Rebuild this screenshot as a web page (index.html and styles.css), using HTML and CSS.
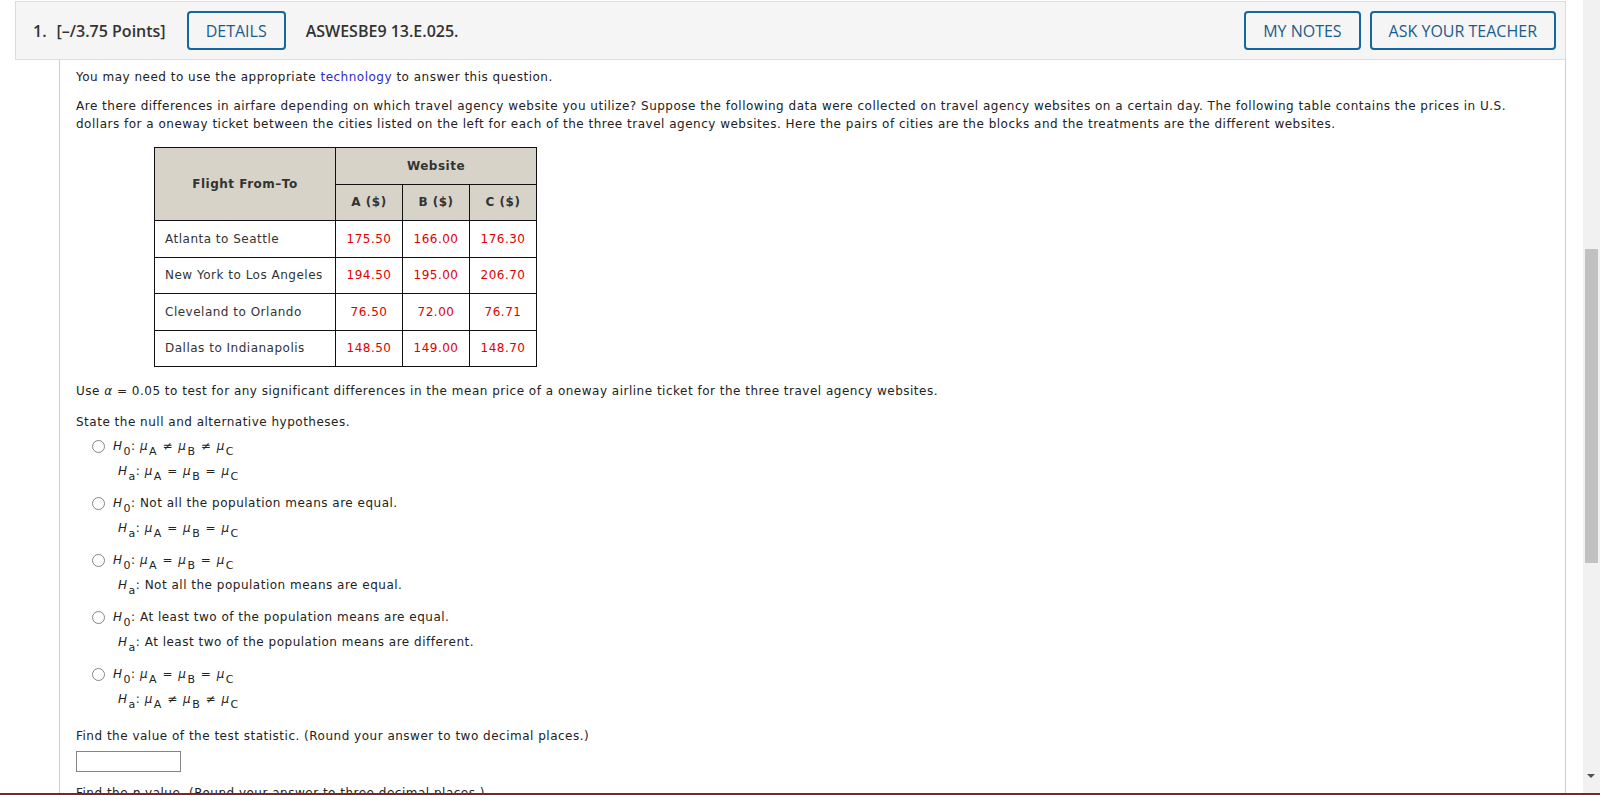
FILE: index.html
```html
<!DOCTYPE html>
<html>
<head>
<meta charset="utf-8">
<title>Question 1</title>
<link rel="stylesheet" href="styles.css">
</head>
<body>
<div class="question">
  <div class="q-header">
    <span class="q-num">1.</span>
    <span class="q-points">[–/3.75 Points]</span>
    <button class="btn btn-details">DETAILS</button>
    <span class="q-code">ASWESBE9 13.E.025.</span>
    <div class="q-actions">
      <button class="btn">MY NOTES</button>
      <button class="btn">ASK YOUR TEACHER</button>
    </div>
  </div>
  <div class="q-body">
    <p class="p-tech">You may need to use the appropriate <a class="link" href="#">technology</a> to answer this question.</p>
    <p class="p-intro">Are there differences in airfare depending on which travel agency website you utilize? Suppose the following data were collected on travel agency websites on a certain day. The following table contains the prices in U.S. dollars for a oneway ticket between the cities listed on the left for each of the three travel agency websites. Here the pairs of cities are the blocks and the treatments are the different websites.</p>
    <table class="data">
      <colgroup><col class="c-city"><col class="c-num"><col class="c-num"><col class="c-num"></colgroup>
      <tr><th rowspan="2">Flight From–To</th><th colspan="3">Website</th></tr>
      <tr><th>A ($)</th><th>B ($)</th><th>C ($)</th></tr>
      <tr><td class="city">Atlanta to Seattle</td><td class="num">175.50</td><td class="num">166.00</td><td class="num">176.30</td></tr>
      <tr><td class="city">New York to Los Angeles</td><td class="num">194.50</td><td class="num">195.00</td><td class="num">206.70</td></tr>
      <tr><td class="city">Cleveland to Orlando</td><td class="num">76.50</td><td class="num">72.00</td><td class="num">76.71</td></tr>
      <tr><td class="city">Dallas to Indianapolis</td><td class="num">148.50</td><td class="num">149.00</td><td class="num">148.70</td></tr>
    </table>
    <p class="p-use">Use <i>α</i> = 0.05 to test for any significant differences in the mean price of a oneway airline ticket for the three travel agency websites.</p>
    <p class="p-state">State the null and alternative hypotheses.</p>
    <div class="options">
      <div class="option">
        <span class="radio"></span>
        <div class="hyps">
          <div class="hyp"><i>H</i><sub>0</sub>: <i>μ</i><sub>A</sub> <span class="op">≠</span> <i>μ</i><sub>B</sub> <span class="op">≠</span> <i>μ</i><sub>C</sub></div>
          <div class="hyp hyp-a"><i>H</i><sub>a</sub>: <i>μ</i><sub>A</sub> <span class="op">=</span> <i>μ</i><sub>B</sub> <span class="op">=</span> <i>μ</i><sub>C</sub></div>
        </div>
      </div>
      <div class="option">
        <span class="radio"></span>
        <div class="hyps">
          <div class="hyp"><i>H</i><sub>0</sub>: Not all the population means are equal.</div>
          <div class="hyp hyp-a"><i>H</i><sub>a</sub>: <i>μ</i><sub>A</sub> <span class="op">=</span> <i>μ</i><sub>B</sub> <span class="op">=</span> <i>μ</i><sub>C</sub></div>
        </div>
      </div>
      <div class="option">
        <span class="radio"></span>
        <div class="hyps">
          <div class="hyp"><i>H</i><sub>0</sub>: <i>μ</i><sub>A</sub> <span class="op">=</span> <i>μ</i><sub>B</sub> <span class="op">=</span> <i>μ</i><sub>C</sub></div>
          <div class="hyp hyp-a"><i>H</i><sub>a</sub>: Not all the population means are equal.</div>
        </div>
      </div>
      <div class="option">
        <span class="radio"></span>
        <div class="hyps">
          <div class="hyp"><i>H</i><sub>0</sub>: At least two of the population means are equal.</div>
          <div class="hyp hyp-a"><i>H</i><sub>a</sub>: At least two of the population means are different.</div>
        </div>
      </div>
      <div class="option">
        <span class="radio"></span>
        <div class="hyps">
          <div class="hyp"><i>H</i><sub>0</sub>: <i>μ</i><sub>A</sub> <span class="op">=</span> <i>μ</i><sub>B</sub> <span class="op">=</span> <i>μ</i><sub>C</sub></div>
          <div class="hyp hyp-a"><i>H</i><sub>a</sub>: <i>μ</i><sub>A</sub> <span class="op">≠</span> <i>μ</i><sub>B</sub> <span class="op">≠</span> <i>μ</i><sub>C</sub></div>
        </div>
      </div>
    </div>
    <p class="p-find">Find the value of the test statistic. (Round your answer to two decimal places.)</p>
    <input class="answer" type="text">
    <p class="p-find">Find the <i>p</i>-value. (Round your answer to three decimal places.)</p>
    <p class="p-find">p-value = </p>
  </div>
</div>
<div class="scrollbar"><div class="thumb"></div><div class="arrow-down"></div></div>
<div class="footer-bar"></div>
</body>
</html>
```

FILE: styles.css
```css
html, body {
  margin: 0;
  height: 100%;
  overflow: hidden;
  background: #fff;
}

body {
  font-family: "DejaVu Sans", Verdana, sans-serif;
  font-size: 12px;
  color: #222;
}

.question {
  margin: 1px 34px 0 15px;
}

.q-header {
  height: 59px;
  box-sizing: border-box;
  border: 1px solid #dcdcdc;
  background: #f5f5f5;
  display: flex;
  align-items: center;
  padding: 0 9px 0 17px;
  font-family: "Open Sans", "Liberation Sans", sans-serif;
  font-size: 16px;
  color: #333;
}

.q-num {
  font-weight: 600;
}

.q-points {
  font-weight: 600;
  margin-left: 10px;
}

.q-code {
  font-weight: 600;
  margin-left: 20px;
}

.btn {
  height: 39px;
  box-sizing: border-box;
  padding: 0 17px;
  border: 2px solid #1565a0;
  border-radius: 4px;
  background: transparent;
  color: #1a5c8c;
  font-family: "Open Sans", "Liberation Sans", sans-serif;
  font-size: 16px;
}

.btn-details {
  margin-left: 21px;
}

.q-actions {
  margin-left: auto;
  display: flex;
  gap: 9px;
}

.q-body {
  margin-left: 44px;
  border-left: 1px solid #cfcfcf;
  border-right: 1px solid #cfcfcf;
  padding: 8px 16px 0 16px;
  min-height: 900px;
  letter-spacing: 0.5px;
}

p {
  margin: 0;
  line-height: 18px;
}

.p-tech { margin-bottom: 11px; }
.p-intro { margin-bottom: 14px; }
.p-use { margin-bottom: 13px; }
.p-state { margin-bottom: 3px; }
.p-find { margin-bottom: 6px; }

.link {
  color: #2b2bcc;
  text-decoration: none;
}

.data {
  border-collapse: collapse;
  margin: 0 0 15px 78px;
  width: 382px;
  table-layout: fixed;
}

.c-city { width: 181px; }
.c-num { width: 67px; }

.data th,
.data td {
  border: 1px solid #111;
  height: 36.5px;
  padding: 0;
  box-sizing: border-box;
}

.data th {
  background: #d7d3c8;
  color: #333;
  font-weight: bold;
  text-align: center;
}

.data td.city {
  text-align: left;
  padding-left: 10px;
  color: #333;
}

.data td.num {
  text-align: center;
  color: #e00000;
}

.options {
  margin-left: 16px;
  margin-bottom: 15px;
}

.option {
  display: flex;
  align-items: flex-start;
  margin-bottom: 7px;
}

.option:last-child {
  margin-bottom: 0;
}

.radio {
  width: 13px;
  height: 13px;
  box-sizing: border-box;
  border: 1px solid #858585;
  border-radius: 50%;
  background: #fff;
  margin-top: 6px;
  margin-right: 8px;
  flex: none;
}

.hyp {
  line-height: 25px;
  white-space: nowrap;
}

.hyp-a {
  margin-left: 5px;
}

.op {
  padding: 0 1px;
}

sub {
  font-size: 11px;
  vertical-align: -5px;
  line-height: 0;
  padding-left: 1px;
}

.answer {
  display: block;
  width: 105px;
  height: 21px;
  box-sizing: border-box;
  border: 1px solid #858585;
  margin: 0 0 12px 0;
  padding: 0;
}

.scrollbar {
  position: fixed;
  top: 0;
  right: 0;
  width: 17px;
  height: 100%;
  background: #f1f1f1;
}

.thumb {
  position: absolute;
  left: 2px;
  width: 13px;
  top: 249px;
  height: 314px;
  background: #c1c1c1;
}

.arrow-down {
  position: absolute;
  left: 4px;
  bottom: 17px;
  width: 0;
  height: 0;
  border-left: 4px solid transparent;
  border-right: 4px solid transparent;
  border-top: 4px solid #505050;
}

.footer-bar {
  position: fixed;
  left: 0;
  right: 0;
  bottom: 0;
  height: 2px;
  background: #7e2528;
  z-index: 2;
}
```
